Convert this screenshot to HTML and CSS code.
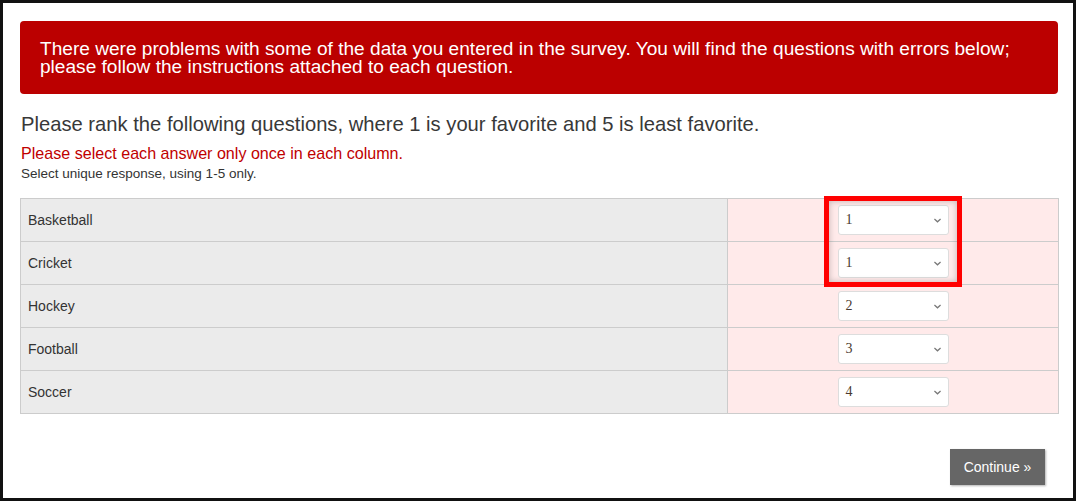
FILE: index.html
```html
<!DOCTYPE html>
<html lang="en">
<head>
    <meta charset="UTF-8">
    <title>Survey</title>
    <link rel="stylesheet" href="styles.css">
</head>
<body>
    <div class="frame">
        <div class="alert">
            There were problems with some of the data you entered in the survey. You will find the questions with errors below;
            please follow the instructions attached to each question.
        </div>

        <h2 class="question">Please rank the following questions, where 1 is your favorite and 5 is least favorite.</h2>
        <div class="error-text">Please select each answer only once in each column.</div>
        <div class="help-text">Select unique response, using 1-5 only.</div>

        <table class="rank-table">
            <tr>
                <td class="label">Basketball</td>
                <td class="answer">
                    <div class="highlight"></div>
                    <div class="select"><span>1</span><svg viewBox="0 0 8 5"><path d="M0.5 0.8 L4 4 L7.5 0.8" /></svg></div>
                </td>
            </tr>
            <tr>
                <td class="label">Cricket</td>
                <td class="answer"><div class="select"><span>1</span><svg viewBox="0 0 8 5"><path d="M0.5 0.8 L4 4 L7.5 0.8" /></svg></div></td>
            </tr>
            <tr>
                <td class="label">Hockey</td>
                <td class="answer"><div class="select"><span>2</span><svg viewBox="0 0 8 5"><path d="M0.5 0.8 L4 4 L7.5 0.8" /></svg></div></td>
            </tr>
            <tr>
                <td class="label">Football</td>
                <td class="answer"><div class="select"><span>3</span><svg viewBox="0 0 8 5"><path d="M0.5 0.8 L4 4 L7.5 0.8" /></svg></div></td>
            </tr>
            <tr>
                <td class="label">Soccer</td>
                <td class="answer"><div class="select"><span>4</span><svg viewBox="0 0 8 5"><path d="M0.5 0.8 L4 4 L7.5 0.8" /></svg></div></td>
            </tr>
        </table>

        <div class="actions">
            <button class="continue-btn">Continue &raquo;</button>
        </div>
    </div>
</body>
</html>
```

FILE: styles.css
```css
body {
    margin: 0;
    background-color: #fff;
    font-family: "Liberation Sans", Arial, sans-serif;
}
.frame {
    width: 1076px;
    height: 501px;
    box-sizing: border-box;
    border: 3px solid #111;
    padding: 18px 15px 0 17px;
}
.alert {
    background-color: #bb0000;
    color: #fff;
    border-radius: 4px;
    padding: 19px 20px 18px 20px;
    font-size: 19.1px;
    line-height: 18px;
}
.question {
    margin: 18px 0 0 1px;
    font-size: 20.2px;
    font-weight: normal;
    color: #383838;
    line-height: 24px;
}
.error-text {
    margin: 7px 0 0 1px;
    color: #c00000;
    font-size: 16.1px;
    line-height: 20px;
}
.help-text {
    margin: 2px 0 0 1px;
    color: #333;
    font-size: 13.5px;
    line-height: 17px;
}
.rank-table {
    margin-top: 16px;
    width: 1039px;
    border-collapse: collapse;
}
.rank-table td {
    border: 1px solid #ccc;
    height: 42px;
    padding: 0;
}
.label {
    background-color: #ebebeb;
    width: 699px;
    padding-left: 7px !important;
    font-size: 14px;
    color: #333;
}
.answer {
    background-color: #ffeaea;
    position: relative;
}
.select {
    margin: 0 auto;
    width: 111px;
    height: 30px;
    box-sizing: border-box;
    background-color: #fff;
    border: 1px solid #ddd;
    border-radius: 3px;
    display: flex;
    align-items: center;
    justify-content: space-between;
    padding: 0 7px 0 7px;
    font-family: "Liberation Serif", "Times New Roman", serif;
    font-size: 14px;
    color: #4a3a30;
}
.select svg {
    width: 7px;
    height: 5px;
    fill: none;
    stroke: #777;
    stroke-width: 1.4;
}
.highlight {
    position: absolute;
    left: 96px;
    top: -3px;
    width: 138px;
    height: 91px;
    box-sizing: border-box;
    border: 5px solid #ff0000;
    box-shadow: inset 0 0 6px rgba(0,0,0,0.25);
    z-index: 2;
    pointer-events: none;
}
.actions {
    display: flex;
    justify-content: flex-end;
    margin-top: 35px;
    padding-right: 13px;
}
.continue-btn {
    background-color: #666;
    color: #fff;
    border: none;
    width: 95px;
    height: 36px;
    font-family: "Liberation Sans", Arial, sans-serif;
    font-size: 14px;
    box-shadow: 1px 1px 2px rgba(0,0,0,0.3);
}
```
